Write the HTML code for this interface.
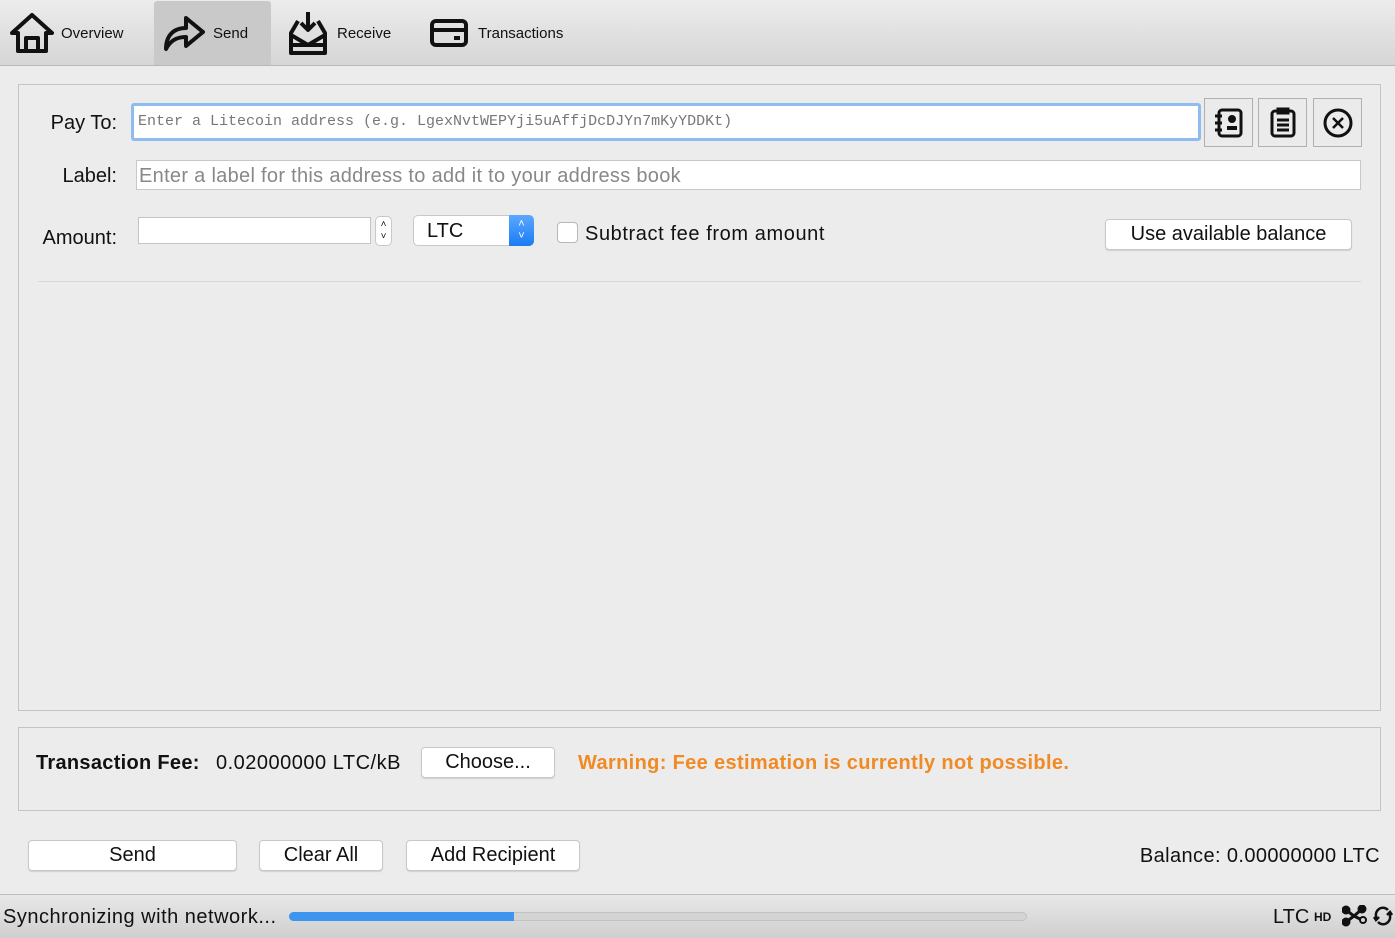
<!DOCTYPE html>
<html><head><style>
*{box-sizing:border-box;margin:0;padding:0}
body{width:1395px;height:938px;background:#ececec;font-family:"Liberation Sans",sans-serif;position:relative;overflow:hidden;color:#111}
.abs{position:absolute}
.tb{left:0;top:0;width:1395px;height:66px;background:linear-gradient(#ececec,#d6d6d6);border-bottom:1px solid #b8b8b8}
.tab{position:absolute;top:0;height:65px;display:flex;align-items:center;font-size:15px}
.tab span{position:relative;top:1px}
.btn{position:absolute;background:#fff;border:1px solid #c8c8c8;border-radius:4px;font-size:20px;text-align:center;box-shadow:0 1px 1px rgba(0,0,0,.12)}
.lbl{position:absolute;font-size:20px;text-align:right}
.ib{position:absolute;top:98px;width:49px;height:49px;background:#ebebeb;border:1px solid #b0b0b0;display:flex;align-items:center;justify-content:center}
</style></head><body>
<div class="abs tb"></div>
<div class="abs" style="left:154px;top:1px;width:117px;height:64px;background:#c9c9c9;border-radius:3px 3px 0 0"></div>
<div class="tab" style="left:9px"><svg width="46" height="42" viewBox="0 0 46 42" fill="none" stroke="#111" stroke-width="4" stroke-linejoin="round"><path d="M3 21 L23 3 L43 21 L37 21 L37 39 L9 39 L9 21 Z"/><rect x="17" y="26" width="12" height="13"/></svg><span style="margin-left:6px">Overview</span></div>
<div class="tab" style="left:162px"><svg width="44" height="40" viewBox="0 0 44 40" fill="none" stroke="#111" stroke-width="4" stroke-linejoin="round"><path d="M4 36 C4 22 12 15 24 15 L24 5 L41 19 L24 33 L24 24 C14 24 8 28 4 36 Z"/></svg><span style="margin-left:7px">Send</span></div>
<div class="tab" style="left:288px"><svg width="40" height="48" viewBox="0 0 40 48" fill="none" stroke="#111" stroke-width="4" stroke-linejoin="round"><path d="M20 3 V20 M13 14 L20 21 L27 14"/><path d="M10 12 L3 24 V44 H37 V24 L30 12"/><path d="M3 26 L20 36 L37 26 M3 36 H37"/></svg><span style="margin-left:9px">Receive</span></div>
<div class="tab" style="left:430px"><svg width="38" height="30" viewBox="0 0 38 30" fill="none" stroke="#111" stroke-width="4"><rect x="2" y="3" width="34" height="24" rx="4"/><path d="M2 12 H36 M24 20 H30"/></svg><span style="margin-left:10px">Transactions</span></div>

<div class="abs" style="left:18px;top:84px;width:1363px;height:627px;border:1px solid #c4c4c4"></div>
<div class="lbl" style="left:20px;top:112px;width:97px">Pay To:</div>
<div class="abs" style="left:131px;top:103px;width:1070px;height:38px;border:3px solid #8ebcf0;border-radius:3px;background:#fff"></div>
<div class="abs" style="left:138px;top:113px;font-family:'Liberation Mono',monospace;font-size:15px;color:#777">Enter a Litecoin address (e.g. LgexNvtWEPYji5uAffjDcDJYn7mKyYDDKt)</div>
<div class="ib" style="left:1204px"><svg width="32" height="32" viewBox="0 0 32 32" fill="none" stroke="#111" stroke-width="3"><rect x="6" y="3" width="22" height="26" rx="3"/><path d="M2 9H9M2 16H9M2 23H9"/><circle cx="19" cy="12" r="2.5" fill="#111"/><path d="M14 21H24" stroke-width="4"/></svg></div>
<div class="ib" style="left:1258px"><svg width="28" height="32" viewBox="0 0 28 32" fill="none" stroke="#111" stroke-width="3"><rect x="3" y="4" width="22" height="25" rx="3"/><path d="M9 2H19V6H9Z M8 13H20M8 18H20M8 23H20"/></svg></div>
<div class="ib" style="left:1313px"><svg width="32" height="32" viewBox="0 0 32 32" fill="none" stroke="#111" stroke-width="3"><circle cx="16" cy="16" r="13"/><path d="M11 11L21 21M21 11L11 21" stroke-width="2.5"/></svg></div>
<div class="lbl" style="left:20px;top:165px;width:97px">Label:</div>
<div class="abs" style="left:136px;top:160px;width:1225px;height:30px;background:#fff;border:1px solid #c8c8c8;font-size:20px;color:#888;padding:4px 2px;letter-spacing:0.3px">Enter a label for this address to add it to your address book</div>
<div class="lbl" style="left:20px;top:227px;width:97px">Amount:</div>
<div class="abs" style="left:138px;top:217px;width:233px;height:27px;background:#fff;border:1px solid #c4c4c4"></div>
<div class="abs" style="left:375px;top:216px;width:17px;height:30px;background:#fff;border:1px solid #c8c8c8;border-radius:5px;font-size:10px;text-align:center;line-height:12px;padding-top:2px">˄<br>˅</div>
<div class="abs" style="left:413px;top:215px;width:121px;height:31px;background:#fff;border:1px solid #c8c8c8;border-radius:5px;font-size:20px;padding:4px 0 0 13px">LTC</div>
<div class="abs" style="left:509px;top:215px;width:25px;height:31px;background:linear-gradient(#5ba8ff,#1a7cf5);border-radius:0 5px 5px 0;color:#fff;font-size:11px;text-align:center;line-height:12px;padding-top:3px">˄<br>˅</div>
<div class="abs" style="left:557px;top:222px;width:21px;height:21px;background:#fff;border:1px solid #b8b8b8;border-radius:4px"></div>
<div class="abs" style="left:585px;top:223px;font-size:20px;letter-spacing:0.6px">Subtract fee from amount</div>
<div class="btn" style="left:1105px;top:219px;width:247px;height:31px;padding-top:3px">Use available balance</div>
<div class="abs" style="left:38px;top:281px;width:1323px;height:1px;background:#d8d8d8"></div>

<div class="abs" style="left:18px;top:727px;width:1363px;height:84px;border:1px solid #c4c4c4"></div>
<div class="abs" style="left:36px;top:752px;font-size:20px;font-weight:bold;letter-spacing:0.3px">Transaction Fee:</div>
<div class="abs" style="left:216px;top:752px;font-size:20px;letter-spacing:0.5px">0.02000000 LTC/kB</div>
<div class="btn" style="left:421px;top:747px;width:134px;height:31px;padding-top:3px">Choose...</div>
<div class="abs" style="left:578px;top:752px;font-size:20px;font-weight:bold;color:#f08a24;letter-spacing:0.35px">Warning: Fee estimation is currently not possible.</div>

<div class="btn" style="left:28px;top:840px;width:209px;height:31px;padding-top:3px">Send</div>
<div class="btn" style="left:259px;top:840px;width:124px;height:31px;padding-top:3px">Clear All</div>
<div class="btn" style="left:406px;top:840px;width:174px;height:31px;padding-top:3px">Add Recipient</div>
<div class="abs" style="right:15px;top:845px;font-size:20px;letter-spacing:0.4px">Balance: 0.00000000 LTC</div>

<div class="abs" style="left:0;top:894px;width:1395px;height:44px;background:linear-gradient(#e8e8e8,#cfcfcf);border-top:1px solid #bdbdbd"></div>
<div class="abs" style="left:3px;top:906px;font-size:20px;letter-spacing:0.5px">Synchronizing with network...</div>
<div class="abs" style="left:289px;top:912px;width:738px;height:9px;background:#d4d4d4;border-radius:5px;border:1px solid #c2c2c2"></div>
<div class="abs" style="left:289px;top:912px;width:225px;height:9px;background:#3d95f0;border-radius:5px 0 0 5px"></div>
<div class="abs" style="left:1273px;top:906px;font-size:20px">LTC</div>
<div class="abs" style="left:1314px;top:910px;font-size:12px;font-weight:bold">HD</div>
<svg class="abs" style="left:1342px;top:905px" width="26" height="22" viewBox="0 0 26 22" fill="none" stroke="#111" stroke-width="3"><circle cx="4" cy="5" r="3" fill="#111"/><circle cx="4" cy="17" r="3" fill="#111"/><circle cx="20" cy="4" r="3" fill="#111"/><circle cx="21" cy="15" r="3" stroke-width="2"/><path d="M4 5 L12 11 L4 17 M12 11 L20 4 M12 11 L18 14"/></svg>
<svg class="abs" style="left:1373px;top:906px" width="20" height="20" viewBox="0 0 20 20" fill="none" stroke="#111" stroke-width="2.5"><path d="M15 4 A7 7 0 0 0 3 10 L3 13 M5 16 A7 7 0 0 0 17 10 L17 7 M1 11 L3 14 L6 11 M19 9 L17 6 L14 9"/></svg>
</body></html>
